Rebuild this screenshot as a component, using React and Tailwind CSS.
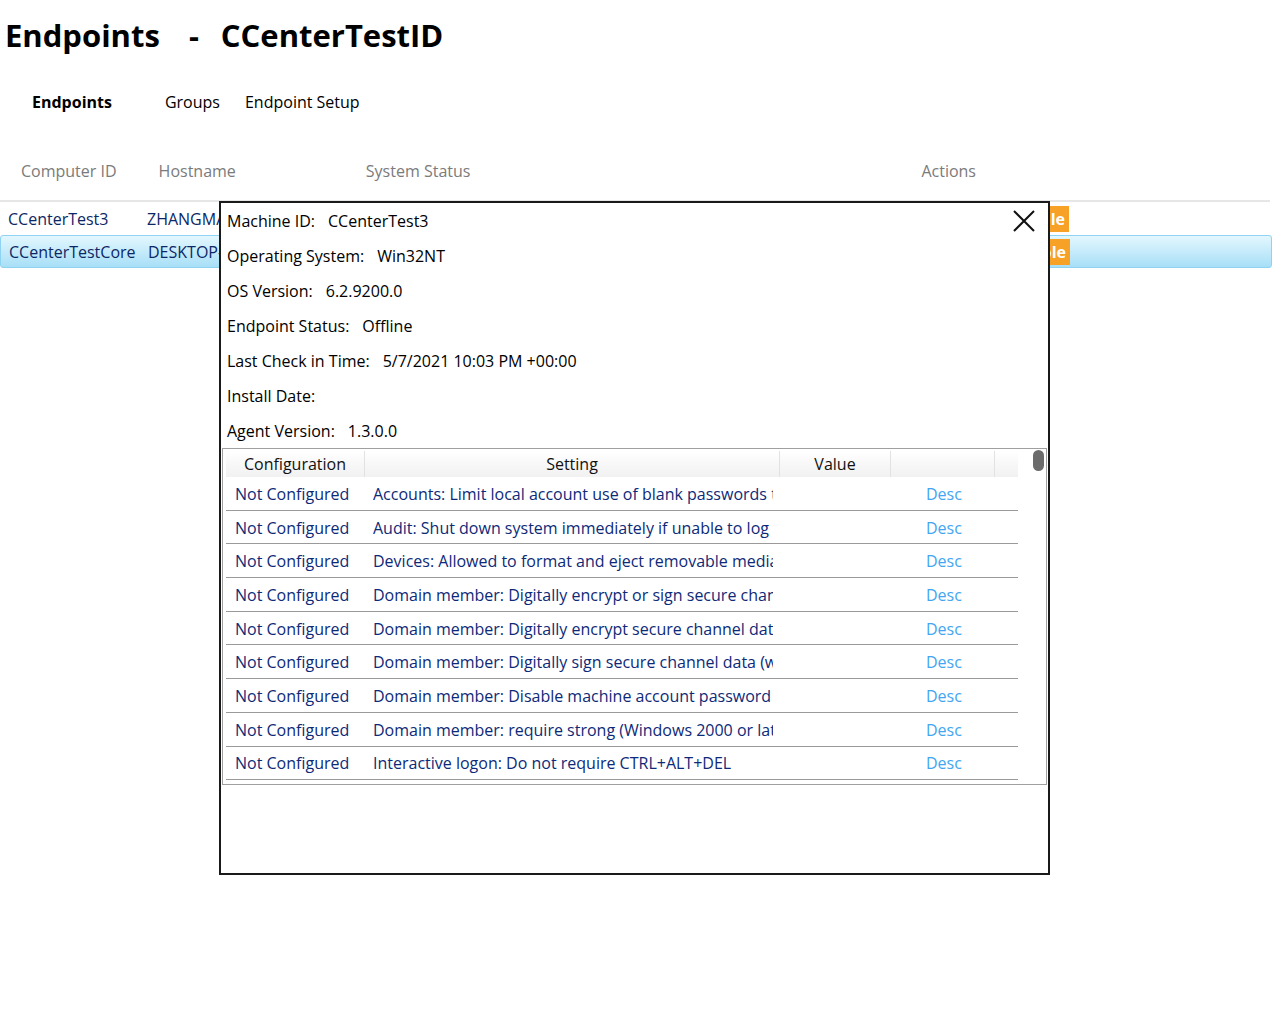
import React from 'react';

const FONT = { fontFamily: '"Open Sans", "Noto Sans", sans-serif' };

const endpoints = [
  { id: 'CCenterTest3', host: 'ZHANGMAN-PC', selected: false },
  { id: 'CCenterTestCore', host: 'DESKTOP-4KQ1', selected: true },
];

const info = [
  ['Machine ID:', 'CCenterTest3'],
  ['Operating System:', 'Win32NT'],
  ['OS Version:', '6.2.9200.0'],
  ['Endpoint Status:', 'Offline'],
  ['Last Check in Time:', '5/7/2021 10:03 PM +00:00'],
  ['Install Date:', ''],
  ['Agent Version:', '1.3.0.0'],
];

const settings = [
  'Accounts: Limit local account use of blank passwords to console logon only',
  'Audit: Shut down system immediately if unable to log security audits',
  'Devices: Allowed to format and eject removable media',
  'Domain member: Digitally encrypt or sign secure channel data (always)',
  'Domain member: Digitally encrypt secure channel data (when possible)',
  'Domain member: Digitally sign secure channel data (when possible)',
  'Domain member: Disable machine account password changes',
  'Domain member: require strong (Windows 2000 or later) session key',
  'Interactive logon: Do not require CTRL+ALT+DEL',
];

const cols = 'grid w-[792px] grid-cols-[139px_415px_111px_104px_23px]';

const DetailsDialog = () => (
  <div className="absolute left-[219px] top-[201px] w-[831px] h-[674px] border-2 border-[#1a1a1a] bg-white">
    <button className="absolute right-[12px] top-[6px] w-6 h-6 flex items-center justify-center">
      <svg width="22" height="22" viewBox="0 0 22 22">
        <path d="M1 1 L21 21 M21 1 L1 21" stroke="#111" strokeWidth="2" />
      </svg>
    </button>

    <div className="pl-[6px]">
      {info.map(([label, value]) => (
        <div key={label} className="h-[35px] flex items-center text-[16px] text-black whitespace-pre">
          <span>{label}</span>
          <span className="ml-[13px]">{value}</span>
        </div>
      ))}
    </div>

    <div className="mx-[1px] h-[337px] border border-[#a0a0a0] relative">
      <div className="pl-[3px] pt-[2px]">
        <div className={`${cols} h-[26px] text-[16px] text-[#111] bg-gradient-to-b from-white to-[#f1f1f1]`}>
          <div className="flex items-center justify-center border-r border-[#e2e2e2]">Configuration</div>
          <div className="flex items-center justify-center border-r border-[#e2e2e2]">Setting</div>
          <div className="flex items-center justify-center border-r border-[#e2e2e2]">Value</div>
          <div className="border-r border-[#e2e2e2]"></div>
          <div></div>
        </div>
        {settings.map((s) => (
          <div key={s} className={`${cols} h-[33.7px] pt-[1px] border-b border-[#9a9a9a] text-[16px]`}>
            <div className="flex items-center pl-[9px] text-[#0d2a78] whitespace-nowrap">Not Configured</div>
            <div className="flex items-center pl-[8px] pr-[7px] text-[#0d2a78] min-w-0">
              <div className="overflow-hidden whitespace-nowrap">{s}</div>
            </div>
            <div></div>
            <div className="flex items-center pl-[35px] text-[#42a6f2]">Desc</div>
            <div></div>
          </div>
        ))}
      </div>
      <div className="absolute right-[2px] top-[1px] w-[11px] h-[21px] rounded-full bg-[#6b6b6b]"></div>
    </div>
  </div>
);

export default function App() {
  return (
    <div className="relative w-[1272px] h-[1009px] bg-white overflow-hidden" style={FONT}>
      <h1 className="h-[70px] flex items-center pl-[5px] text-[31px] font-bold text-black whitespace-pre">
        <span>Endpoints</span>
        <span className="ml-[29px]">-</span>
        <span className="ml-[22px]">CCenterTestID</span>
      </h1>

      <nav className="h-[64px] flex items-center text-[16px] text-black">
        <span className="ml-[32px] font-bold">Endpoints</span>
        <span className="ml-[53px]">Groups</span>
        <span className="ml-[25px]">Endpoint Setup</span>
      </nav>

      <div className="h-[66px] pt-[8px] flex items-center text-[16px] text-[#7b7b7b]">
        <span className="ml-[21px]">Computer ID</span>
        <span className="ml-[42px]">Hostname</span>
        <span className="ml-[130px]">System Status</span>
        <span className="ml-[451px]">Actions</span>
      </div>

      <div className="w-[1270px] border-t-2 border-[#e6e6e6]">
        {endpoints.map((e) => (
          <div
            key={e.id}
            className={`h-[33px] flex items-center text-[16px] text-[#0c2766] ${
              e.selected
                ? 'w-[1272px] rounded-[3px] border border-[#8fd2f2] bg-gradient-to-b from-[#e3f7fe] to-[#a7dff7]'
                : ''
            }`}
          >
            <div className="w-[139px] shrink-0 pl-[8px] whitespace-nowrap">{e.id}</div>
            <div className="w-[200px] shrink-0 pl-[8px] whitespace-nowrap overflow-hidden">{e.host}</div>
            <div className="flex-1"></div>
            <div className="mr-[201px] shrink-0 h-[26px] px-[4px] flex items-center bg-[#f7a127] text-white font-bold">
              Disable
            </div>
          </div>
        ))}
      </div>

      <DetailsDialog />
    </div>
  );
}
